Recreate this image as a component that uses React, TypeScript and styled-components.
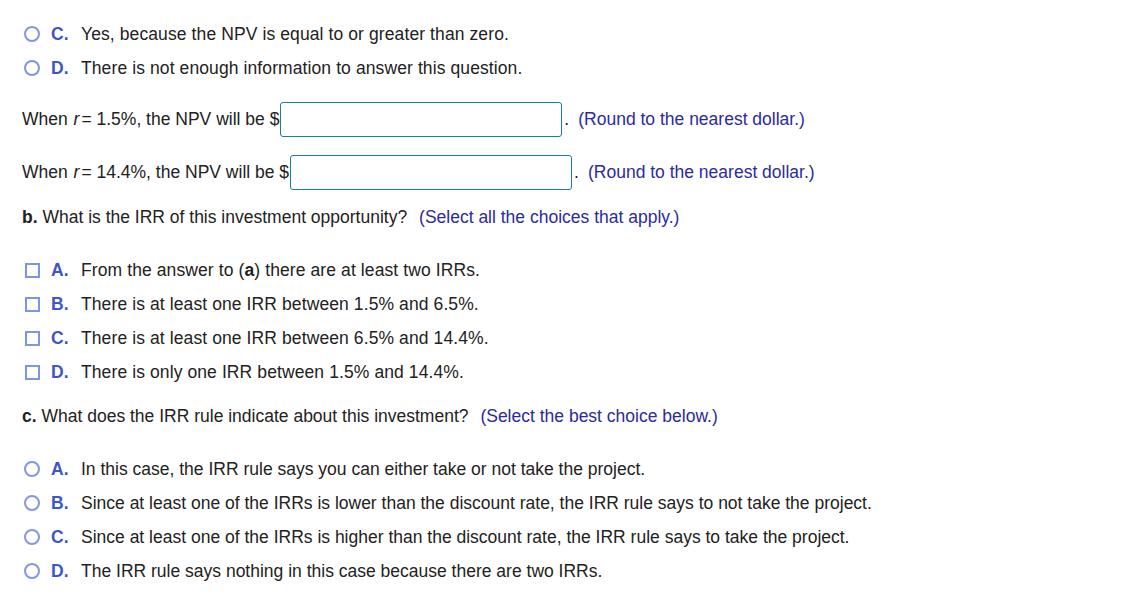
import styled, {createGlobalStyle} from 'styled-components';

const Global = createGlobalStyle`
  body {
    margin: 0;
    background: #ffffff;
    font-family: 'Liberation Sans', Arial, sans-serif;
    font-size: 17.5px;
    color: #222222;
  }
`;

const Page = styled.div`
  padding: 17px 0 0 22px;
  display: flex;
  flex-direction: column;
`;

const Choice = styled.div`
  display: flex;
  align-items: center;
  height: 34px;
`;

const Radio = styled.span`
  width: 16px;
  height: 16px;
  box-sizing: border-box;
  border: 2px solid #8397e0;
  border-radius: 50%;
  margin-left: 2px;
  flex-shrink: 0;
`;

const Check = styled.span`
  width: 15px;
  height: 15px;
  box-sizing: border-box;
  border: 2px solid #7d95e6;
  margin-left: 3px;
  flex-shrink: 0;
`;

const Letter = styled.span`
  width: 30px;
  margin-left: 11px;
  font-weight: bold;
  color: #3c55c8;
`;

const Body = styled.span`
  letter-spacing: 0.1px;
`;

const NpvLine = styled.div<{$top: number}>`
  display: flex;
  align-items: center;
  height: 35px;
  margin-top: ${p => p.$top}px;
  white-space: pre;
`;

const Var = styled.i`
  margin-left: 1px;
  margin-right: 2px;
`;

const Input = styled.span`
  width: 282px;
  height: 35px;
  box-sizing: border-box;
  border: 1px solid #1d7c9c;
  border-radius: 3px;
  margin-left: 1px;
`;

const Dot = styled.span`
  margin-left: 2px;
`;

const Hint = styled.span<{$gap?: number}>`
  color: #2b2b9e;
  margin-left: ${p => p.$gap ?? 0}px;
`;

const Question = styled.div<{$top: number}>`
  height: 20px;
  line-height: 20px;
  margin-top: ${p => p.$top}px;
`;

const List = styled.div<{$top: number}>`
  margin-top: ${p => p.$top}px;
`;

const aChoices = [
  ['C.', 'Yes, because the NPV is equal to or greater than zero.'],
  ['D.', 'There is not enough information to answer this question.'],
];

const cChoices = [
  ['A.', 'In this case, the IRR rule says you can either take or not take the project.'],
  ['B.', 'Since at least one of the IRRs is lower than the discount rate, the IRR rule says to not take the project.'],
  ['C.', 'Since at least one of the IRRs is higher than the discount rate, the IRR rule says to take the project.'],
  ['D.', 'The IRR rule says nothing in this case because there are two IRRs.'],
];

export default function App() {
  return (
    <Page>
      <Global />
      {aChoices.map(([l, t]) => (
        <Choice key={l}>
          <Radio />
          <Letter>{l}</Letter>
          <Body>{t}</Body>
        </Choice>
      ))}
      <NpvLine $top={17}>
        <span>
          When <Var>r</Var>= 1.5%, the NPV will be $
        </span>
        <Input />
        <Dot>.</Dot>
        <Hint $gap={9}>(Round to the nearest dollar.)</Hint>
      </NpvLine>
      <NpvLine $top={18}>
        <span>
          When <Var>r</Var>= 14.4%, the NPV will be $
        </span>
        <Input />
        <Dot>.</Dot>
        <Hint $gap={9}>(Round to the nearest dollar.)</Hint>
      </NpvLine>
      <Question $top={17}>
        <b>b.</b> What is the IRR of this investment opportunity?{' '}
        <Hint $gap={7}>(Select all the choices that apply.)</Hint>
      </Question>
      <List $top={26}>
        <Choice>
          <Check />
          <Letter>A.</Letter>
          <Body>
            From the answer to (<b>a</b>) there are at least two IRRs.
          </Body>
        </Choice>
        <Choice>
          <Check />
          <Letter>B.</Letter>
          <Body>There is at least one IRR between 1.5% and 6.5%.</Body>
        </Choice>
        <Choice>
          <Check />
          <Letter>C.</Letter>
          <Body>There is at least one IRR between 6.5% and 14.4%.</Body>
        </Choice>
        <Choice>
          <Check />
          <Letter>D.</Letter>
          <Body>There is only one IRR between 1.5% and 14.4%.</Body>
        </Choice>
      </List>
      <Question $top={17}>
        <b>c.</b> What does the IRR rule indicate about this investment?{' '}
        <Hint $gap={7}>(Select the best choice below.)</Hint>
      </Question>
      <List $top={26}>
        {cChoices.map(([l, t]) => (
          <Choice key={l}>
            <Radio />
            <Letter>{l}</Letter>
            <span>{t}</span>
          </Choice>
        ))}
      </List>
    </Page>
  );
}
